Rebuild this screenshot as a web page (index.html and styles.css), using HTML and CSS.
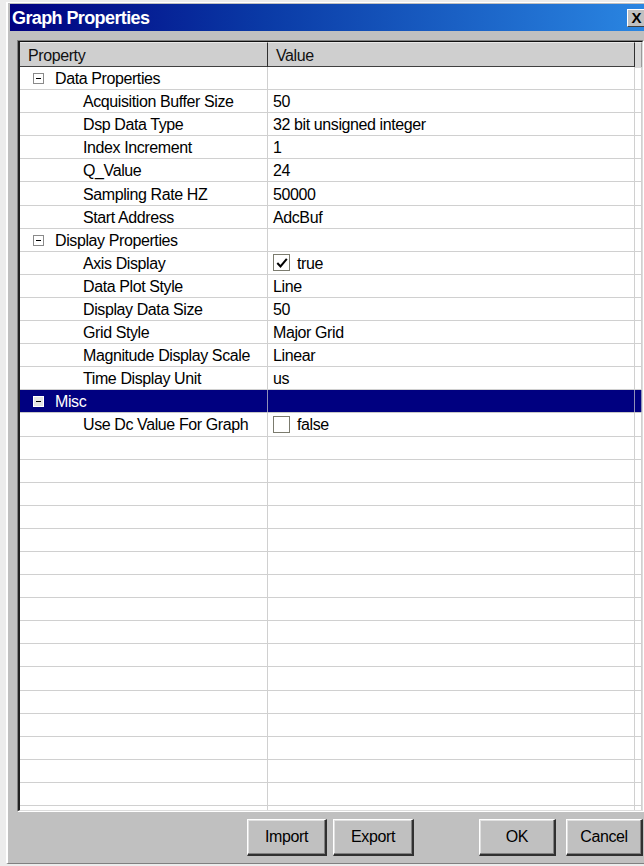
FILE: index.html
```html
<!DOCTYPE html>
<html>
<head>
<meta charset="utf-8">
<title>Graph Properties</title>
<link rel="stylesheet" href="styles.css">
</head>
<body>
<div class="window">
  <div class="titlebar">
    <span class="title">Graph Properties</span>
    <span class="close">X</span>
  </div>

  <div class="grid-frame">
    <div class="grid">
      <div class="head">
        <div class="hcell">Property</div>
        <div class="hcell">Value</div>
        <div class="hcell hpad"></div>
      </div>
      <div class="rows">
        <div class="row cat"><div class="cell name"><span class="toggle"></span>Data Properties</div><div class="cell"></div><div class="cell"></div></div>
        <div class="row"><div class="cell name sub">Acquisition Buffer Size</div><div class="cell val">50</div><div class="cell"></div></div>
        <div class="row"><div class="cell name sub">Dsp Data Type</div><div class="cell val">32 bit unsigned integer</div><div class="cell"></div></div>
        <div class="row"><div class="cell name sub">Index Increment</div><div class="cell val">1</div><div class="cell"></div></div>
        <div class="row"><div class="cell name sub">Q_Value</div><div class="cell val">24</div><div class="cell"></div></div>
        <div class="row"><div class="cell name sub">Sampling Rate HZ</div><div class="cell val">50000</div><div class="cell"></div></div>
        <div class="row"><div class="cell name sub">Start Address</div><div class="cell val">AdcBuf</div><div class="cell"></div></div>
        <div class="row cat"><div class="cell name"><span class="toggle"></span>Display Properties</div><div class="cell"></div><div class="cell"></div></div>
        <div class="row"><div class="cell name sub">Axis Display</div><div class="cell val"><span class="check on"><svg viewBox="0 0 14 14" width="14" height="14"><path d="M2.3 7 L5.5 10.4 L11.8 2.8" fill="none" stroke="#000" stroke-width="2"/></svg></span>true</div><div class="cell"></div></div>
        <div class="row"><div class="cell name sub">Data Plot Style</div><div class="cell val">Line</div><div class="cell"></div></div>
        <div class="row"><div class="cell name sub">Display Data Size</div><div class="cell val">50</div><div class="cell"></div></div>
        <div class="row"><div class="cell name sub">Grid Style</div><div class="cell val">Major Grid</div><div class="cell"></div></div>
        <div class="row"><div class="cell name sub">Magnitude Display Scale</div><div class="cell val">Linear</div><div class="cell"></div></div>
        <div class="row"><div class="cell name sub">Time Display Unit</div><div class="cell val">us</div><div class="cell"></div></div>
        <div class="row cat selected"><div class="cell name"><span class="toggle"></span>Misc</div><div class="cell"></div><div class="cell"></div></div>
        <div class="row"><div class="cell name sub">Use Dc Value For Graph</div><div class="cell val"><span class="check"></span>false</div><div class="cell"></div></div>
        <div class="row"><div class="cell"></div><div class="cell"></div><div class="cell"></div></div>
        <div class="row"><div class="cell"></div><div class="cell"></div><div class="cell"></div></div>
        <div class="row"><div class="cell"></div><div class="cell"></div><div class="cell"></div></div>
        <div class="row"><div class="cell"></div><div class="cell"></div><div class="cell"></div></div>
        <div class="row"><div class="cell"></div><div class="cell"></div><div class="cell"></div></div>
        <div class="row"><div class="cell"></div><div class="cell"></div><div class="cell"></div></div>
        <div class="row"><div class="cell"></div><div class="cell"></div><div class="cell"></div></div>
        <div class="row"><div class="cell"></div><div class="cell"></div><div class="cell"></div></div>
        <div class="row"><div class="cell"></div><div class="cell"></div><div class="cell"></div></div>
        <div class="row"><div class="cell"></div><div class="cell"></div><div class="cell"></div></div>
        <div class="row"><div class="cell"></div><div class="cell"></div><div class="cell"></div></div>
        <div class="row"><div class="cell"></div><div class="cell"></div><div class="cell"></div></div>
        <div class="row"><div class="cell"></div><div class="cell"></div><div class="cell"></div></div>
        <div class="row"><div class="cell"></div><div class="cell"></div><div class="cell"></div></div>
        <div class="row"><div class="cell"></div><div class="cell"></div><div class="cell"></div></div>
        <div class="row"><div class="cell"></div><div class="cell"></div><div class="cell"></div></div>
        <div class="row"><div class="cell"></div><div class="cell"></div><div class="cell"></div></div>
      </div>
    </div>
  </div>

  <div class="buttons">
    <button class="btn btn-import">Import</button>
    <button class="btn btn-export">Export</button>
    <button class="btn btn-ok">OK</button>
    <button class="btn btn-cancel">Cancel</button>
  </div>
</div>
</body>
</html>
```

FILE: styles.css
```css
html, body {
  margin: 0;
  padding: 0;
  height: 100%;
  overflow: hidden;
  background: #ececec;
}

body {
  font-family: "Liberation Sans", Arial, sans-serif;
  font-size: 16px;
  color: #000;
}

/* dialog window */
.window {
  margin: 2px 0 0 6px;
  width: 640px;
  height: 862px;
  box-sizing: border-box;
  background: #c0c0c0;
  border-top: 1px solid #ffffff;
  border-left: 2px solid #ffffff;
  border-bottom: 1px solid #808080;
  padding: 1px 0 0 2px;
}

.titlebar {
  height: 27px;
  display: flex;
  align-items: center;
  justify-content: space-between;
  background: linear-gradient(to right, #000080 0%, #0a3aa6 40%, #2a86e2 100%);
}

.title {
  color: #fff;
  font-weight: bold;
  font-size: 18px;
  letter-spacing: -0.6px;
  padding-left: 2px;
  margin-top: 1px;
}

.close {
  width: 19px;
  height: 18px;
  box-sizing: border-box;
  margin-top: 1px;
  background: #c0c0c0;
  border-top: 1px solid #fff;
  border-left: 1px solid #fff;
  border-right: 1px solid #404040;
  border-bottom: 1px solid #404040;
  font-weight: bold;
  font-size: 15px;
  line-height: 16px;
  text-align: center;
  color: #000;
}

/* property grid, sunken frame */
.grid-frame {
  margin: 9px 0 0 7px;
  width: 627px;
  box-sizing: border-box;
  border-top: 1px solid #808080;
  border-left: 1px solid #808080;
  border-right: 1px solid #ffffff;
  border-bottom: 1px solid #ffffff;
}

.grid {
  border-top: 1px solid #101010;
  border-left: 2px solid #202020;
  border-right: 1px solid #dcdcdc;
  border-bottom: 1px solid #dcdcdc;
  background: #fff;
}

.head {
  display: grid;
  grid-template-columns: 248px 367px 1fr;
  height: 25px;
  box-sizing: border-box;
  background: #cfcfcf;
  border-bottom: 1px solid #404040;
}

.hcell {
  border-right: 1px solid #303030;
  border-top: 1px solid #e8e8e8;
  padding-left: 8px;
  line-height: 25px;
  letter-spacing: -0.4px;
  color: #111;
}

.hcell.hpad {
  border-right: 1px solid #9a9a9a;
  background: #d8d8d8;
  padding: 0;
}

.rows {
  height: 743px;
  overflow: hidden;
}

.row {
  display: grid;
  grid-template-columns: 248px 367px 1fr;
  height: 23.1px;
  box-sizing: border-box;
  border-bottom: 1px solid #d0d0d0;
}

.cell {
  border-right: 1px solid #d0d0d0;
  display: flex;
  align-items: center;
  padding-top: 2px;
  white-space: nowrap;
  letter-spacing: -0.4px;
  overflow: hidden;
}

.cell.name {
  padding-left: 13px;
}

.cell.name.sub {
  padding-left: 63px;
}

.cell.val {
  padding-left: 5px;
}

/* expand / collapse box of a category */
.toggle {
  position: relative;
  width: 11px;
  height: 11px;
  box-sizing: border-box;
  border: 1px solid #8a8a8a;
  background: #fff;
  margin-right: 11px;
  margin-top: -1px;
  flex: none;
}

.toggle::after {
  content: "";
  position: absolute;
  left: 2px;
  top: 4px;
  width: 5px;
  height: 1px;
  background: #000;
}

.row.selected {
  background: #000080;
  border-bottom-color: #c8c8c8;
}

.row.selected .cell {
  color: #fff;
  border-right-color: #9090b8;
}

.row.selected .toggle {
  border-color: #fff;
  background: #e4e4e4;
}

/* checkbox editors */
.check {
  width: 17px;
  height: 17px;
  box-sizing: border-box;
  border: 1px solid #7b7b6e;
  background: #fff;
  margin-right: 7px;
  margin-top: -2px;
  display: flex;
  align-items: center;
  justify-content: center;
  flex: none;
}

/* dialog buttons */
.buttons {
  display: flex;
  margin-top: 7px;
  padding-left: 237px;
}

.btn {
  height: 37px;
  box-sizing: border-box;
  background: #c0c0c0;
  font-family: "Liberation Sans", Arial, sans-serif;
  font-size: 16px;
  letter-spacing: -0.4px;
  color: #000;
  border-top: 1px solid #ffffff;
  border-left: 1px solid #ffffff;
  border-right: 2px solid #303030;
  border-bottom: 2px solid #303030;
  box-shadow: inset -1px -1px 0 #808080, inset 1px 1px 0 #e0e0e0;
  padding: 0;
}

.btn-import { width: 80px; }
.btn-export { width: 81px; margin-left: 6px; }
.btn-ok { width: 77px; margin-left: 65px; }
.btn-cancel { width: 77px; margin-left: 10px; }
```
